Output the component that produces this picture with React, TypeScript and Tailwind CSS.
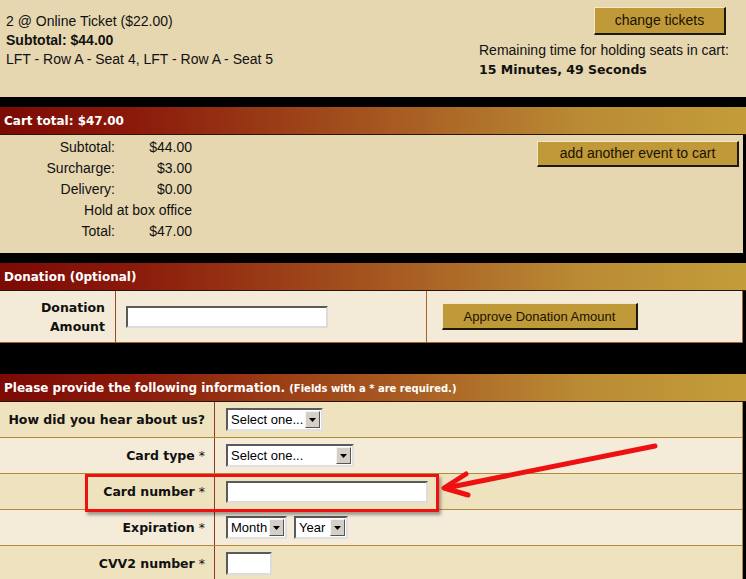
import React from 'react';

const headerBg =
  'bg-[linear-gradient(to_right,#7c0a05,#8b1a0b_18%,#a5551f_50%,#ba8b34_78%,#c39d3a)]';

const cartLines = [
  { label: 'Subtotal:', value: '$44.00' },
  { label: 'Surcharge:', value: '$3.00' },
  { label: 'Delivery:', value: '$0.00' },
];

function SectionHeader({ children }: { children: React.ReactNode }) {
  return (
    <div
      className={`h-[28px] border-b border-[#2b1405] pl-[4px] pt-[1px] text-white font-bold text-[12px] leading-[27px] font-['DejaVu_Sans',sans-serif] ${headerBg}`}
    >
      {children}
    </div>
  );
}

function GoldButton({ children, className }: { children: React.ReactNode; className: string }) {
  return (
    <button
      className={`bg-[#c09a38] text-[#1a1200] border-t border-l border-t-[#f1e7c9] border-l-[#f1e7c9] border-b-2 border-r-2 border-b-[#1c1a0c] border-r-[#1c1a0c] ${className}`}
    >
      {children}
    </button>
  );
}

function FakeSelect({ label, width }: { label: string; width: string }) {
  return (
    <div
      className={`flex h-[23px] bg-white border-2 border-t-[#5a5a5a] border-l-[#5a5a5a] border-b-[#e0e0e0] border-r-[#e0e0e0] ${width}`}
    >
      <span className="flex-1 pl-[3px] text-[13px] leading-[19px] text-black font-['Liberation_Sans',sans-serif]">
        {label}
      </span>
      <span className="my-[1px] mr-[1px] w-[15px] bg-[#d4d0c8] border border-t-[#f4f4f4] border-l-[#f4f4f4] border-b-[#555] border-r-[#555] flex items-center justify-center">
        <svg width="7" height="4" viewBox="0 0 7 4">
          <path d="M0 0h7L3.5 4z" fill="#000" />
        </svg>
      </span>
    </div>
  );
}

function TextBox({ width }: { width: string }) {
  return (
    <div
      className={`bg-white border-2 border-t-[#5a5a5a] border-l-[#5a5a5a] border-b-[#dcdcdc] border-r-[#dcdcdc] ${width}`}
    />
  );
}

function FormRow({
  label,
  required,
  dark,
  children,
}: {
  label: string;
  required?: boolean;
  dark: boolean;
  children: React.ReactNode;
}) {
  return (
    <div
      className={`flex h-[36px] border-b border-r border-[#b08a3a] ${dark ? 'bg-[#efe3bf]' : 'bg-[#f4ecd9]'}`}
    >
      <div className="w-[215px] border-r border-[#8d3b1c] flex items-center justify-end pr-[9px] pt-[2px] text-[12.5px] text-[#111] font-['DejaVu_Sans',sans-serif]">
        <span className="font-bold">{label}</span>
        {required && <span className="ml-[4px]">*</span>}
      </div>
      <div className="flex-1 flex items-center gap-[7px] pl-[11px]">{children}</div>
    </div>
  );
}

export default function App() {
  return (
    <div className="relative w-[746px] h-[579px] overflow-hidden bg-black text-[#111] font-['Liberation_Sans',Arial,sans-serif]">
      {/* ticket summary */}
      <div className="h-[97px] bg-[#e6d7b0] flex justify-between">
        <div className="pl-[6px] pt-[12px] text-[14px] leading-[19px]">
          <p>2 @ Online Ticket ($22.00)</p>
          <p className="font-bold">Subtotal: $44.00</p>
          <p>LFT - Row A - Seat 4, LFT - Row A - Seat 5</p>
        </div>
        <div className="w-[267px] pt-[7px] flex flex-col">
          <GoldButton className="self-end mr-[20px] w-[132px] h-[28px] text-[14px]">change tickets</GoldButton>
          <p className="mt-[6px] text-[14px] leading-[19px]">Remaining time for holding seats in cart:</p>
          <p className="font-bold text-[12.5px] leading-[19px] font-['DejaVu_Sans',sans-serif]">15 Minutes, 49 Seconds</p>
        </div>
      </div>

      <div className="h-[10px]" />
      <SectionHeader>Cart total: $47.00</SectionHeader>

      {/* cart totals */}
      <div className="h-[118px] mr-[3px] bg-[#e6d7b0] flex items-start justify-between">
        <div className="pt-[2px] grid grid-cols-[115px_77px] text-[14px] leading-[21px] text-right">
          {cartLines.map((l) => (
            <React.Fragment key={l.label}>
              <span>{l.label}</span>
              <span>{l.value}</span>
            </React.Fragment>
          ))}
          <span className="col-span-2">Hold at box office</span>
          <span>Total:</span>
          <span>$47.00</span>
        </div>
        <GoldButton className="mt-[6px] mr-[4px] w-[202px] h-[26px] text-[14px]">add another event to cart</GoldButton>
      </div>

      <div className="h-[10px]" />
      <SectionHeader>Donation (0ptional)</SectionHeader>

      {/* donation */}
      <div className="h-[52px] mr-[3px] flex bg-[#f3ebd8] border-b border-r border-[#a8642c]">
        <div className="w-[116px] border-r border-[#9a4a22] flex flex-col justify-center items-end pr-[10px] text-[12.5px] leading-[19px] font-bold font-['DejaVu_Sans',sans-serif]">
          <span>Donation</span>
          <span>Amount</span>
        </div>
        <div className="w-[311px] border-r border-[#a8642c] flex items-center pl-[10px]">
          <TextBox width="w-[202px] h-[22px]" />
        </div>
        <div className="flex-1 flex items-center pl-[15px]">
          <GoldButton className="w-[196px] h-[27px] text-[13px] pt-[2px]">Approve Donation Amount</GoldButton>
        </div>
      </div>

      <div className="h-[31px]" />
      <SectionHeader>
        Please provide the following information. <span className="text-[10px]">(Fields with a * are required.)</span>
      </SectionHeader>

      {/* form */}
      <div className="mr-[3px]">
        <FormRow label="How did you hear about us?" dark>
          <FakeSelect label="Select one..." width="w-[97px]" />
        </FormRow>
        <FormRow label="Card type" required dark={false}>
          <FakeSelect label="Select one..." width="w-[128px]" />
        </FormRow>
        <FormRow label="Card number" required dark>
          <TextBox width="w-[202px] h-[22px]" />
        </FormRow>
        <FormRow label="Expiration" required dark={false}>
          <FakeSelect label="Month" width="w-[61px]" />
          <FakeSelect label="Year" width="w-[54px]" />
        </FormRow>
        <FormRow label="CVV2 number" required dark>
          <TextBox width="w-[46px] h-[23px]" />
        </FormRow>
      </div>

      {/* annotation overlay */}
      <div className="absolute left-[85px] top-[474px] w-[354px] h-[38px] border-[3px] border-[#ee1111] shadow-[2px_3px_3px_rgba(0,0,0,0.35)] pointer-events-none" />
      <svg className="absolute left-0 top-0 pointer-events-none" width="746" height="579">
        <g stroke="#ee1111" strokeWidth="5" strokeLinecap="round" strokeLinejoin="round" fill="none">
          <line x1="655" y1="446" x2="446" y2="488" />
          <polyline points="466,474 444,488 468,495" />
        </g>
      </svg>
    </div>
  );
}
